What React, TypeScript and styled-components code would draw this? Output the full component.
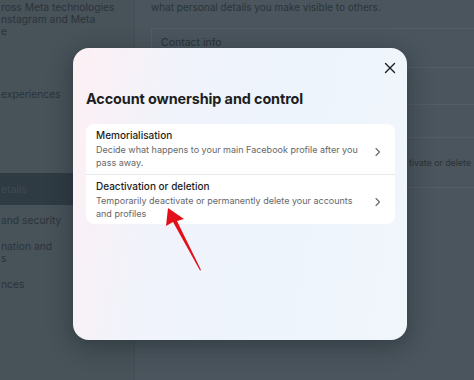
import React from "react";
import styled, { createGlobalStyle } from "styled-components";

const Global = createGlobalStyle`
  html, body { margin: 0; padding: 0; }
  body { font-family: Inter, "Open Sans", "Liberation Sans", sans-serif; }
  #root { width: 474px; height: 380px; overflow: hidden; }
`;

const Page = styled.div`
  position: relative;
  width: 474px;
  height: 380px;
  display: flex;
  background: #4a555d;
  overflow: hidden;
`;

const Sidebar = styled.div`
  width: 134px;
  flex: none;
  border-right: 1px solid #434e55;
  background: #475259;
  display: flex;
  flex-direction: column;
  color: #2b3439;
  font-size: 10.3px;
`;

const SideBlock = styled.div<{ $top: number }>`
  margin-top: ${(p) => p.$top}px;
  padding: 0 6px 0 1px;
  line-height: 12px;
`;

const SideItem = styled.div<{ $active?: boolean; $top?: number }>`
  margin-top: ${(p) => p.$top ?? 0}px;
  padding: 0 6px 0 1px;
  line-height: 12px;
  ${(p) =>
    p.$active &&
    `
    background: #2f3b43;
    height: 32px;
    display: flex;
    align-items: center;
    color: #3f4a51;
  `}
`;

const Content = styled.div`
  flex: 1;
  min-width: 0;
  padding-left: 16px;
  display: flex;
  flex-direction: column;
  color: #2b3439;
  font-size: 10px;
`;

const Lead = styled.div`
  line-height: 12px;
  margin-top: 1px;
`;

const InfoCard = styled.div`
  margin-top: 15px;
  border-top: 1px solid #525d64;
  border-left: 1px solid #525d64;
  display: flex;
  flex-direction: column;
`;

const InfoRow = styled.div<{ $h: number; $pt?: number }>`
  height: ${(p) => p.$h}px;
  box-sizing: border-box;
  border-bottom: 1px solid #525d64;
  padding: ${(p) => p.$pt ?? 0}px 0 0 9px;
  display: flex;
  align-items: ${(p) => (p.$pt ? "flex-start" : "center")};
  font-size: 10.5px;
  line-height: 13px;
  color: #2a3338;
`;

const InfoText = styled.div`
  padding-left: 248px;
  font-size: 9px;
  letter-spacing: -0.1px;
  white-space: nowrap;
`;

const Overlay = styled.div`
  position: absolute;
  inset: 0;
  padding: 48px 0 0 73px;
  display: flex;
  align-items: flex-start;
`;

const Modal = styled.div`
  position: relative;
  width: 334px;
  height: 292px;
  box-sizing: border-box;
  border-radius: 16px;
  background: linear-gradient(100deg, #fdf0f4 0%, #f1f3fb 28%, #edf4fc 60%, #f1f6fb 100%);
  box-shadow: 0 6px 24px rgba(20, 28, 34, 0.45);
  padding: 12px 12px 0 13px;
  display: flex;
  flex-direction: column;
`;

const CloseRow = styled.div`
  display: flex;
  justify-content: flex-end;
  margin-right: -3px;
`;

const CloseBtn = styled.button`
  width: 16px;
  height: 16px;
  padding: 0;
  border: none;
  background: none;
  display: flex;
  align-items: center;
  justify-content: center;
  color: #1c1e21;
`;

const Title = styled.h2`
  margin: 13px 0 0 0;
  font-size: 14.4px;
  line-height: 20px;
  font-weight: 700;
  color: #1c1e21;
  letter-spacing: -0.1px;
`;

const Card = styled.div`
  margin-top: 15px;
  background: #ffffff;
  border-radius: 8px;
  display: flex;
  flex-direction: column;
  overflow: hidden;
`;

const Row = styled.div<{ $divider?: boolean }>`
  height: 50px;
  box-sizing: border-box;
  padding: 5px 13px 0 10px;
  display: flex;
  align-items: center;
  gap: 8px;
  border-top: ${(p) => (p.$divider ? "1px solid #e7e9ec" : "none")};
`;

const RowText = styled.div`
  flex: 1;
  display: flex;
  flex-direction: column;
  align-self: flex-start;
`;

const RowTitle = styled.div`
  font-size: 10px;
  line-height: 13px;
  color: #1c1e21;
  font-weight: 500;
`;

const RowDesc = styled.div`
  font-size: 9px;
  line-height: 13px;
  color: #65676b;
  margin-top: 1px;
`;

const Arrow = styled.svg`
  position: absolute;
  left: 0;
  top: 0;
  pointer-events: none;
`;

const Chevron = () => (
  <svg width="8" height="10" viewBox="0 0 8 10">
    <path d="M2 1.5 L5.5 5 L2 8.5" fill="none" stroke="#65676b" strokeWidth="1.1" strokeLinecap="round" strokeLinejoin="round" />
  </svg>
);

export default function App() {
  return (
    <>
      <Global />
      <Page>
        <Sidebar>
          <SideBlock $top={1}>
            ross Meta technologies
            <br />
            nstagram and Meta
            <br />e
          </SideBlock>
          <SideItem $top={51}>experiences</SideItem>
          <SideItem $top={7}>&nbsp;</SideItem>
          <SideItem $top={54} $active>
            etails
          </SideItem>
          <SideItem $top={9}>and security</SideItem>
          <SideItem $top={14}>
            nation and
            <br />s
          </SideItem>
          <SideItem $top={14}>nces</SideItem>
        </Sidebar>
        <Content>
          <Lead>what personal details you make visible to others.</Lead>
          <InfoCard>
            <InfoRow $h={39} $pt={7}>Contact info</InfoRow>
            <InfoRow $h={37}>&nbsp;</InfoRow>
            <InfoRow $h={33}>&nbsp;</InfoRow>
            <InfoRow $h={50}>
              <InfoText>tivate or delete</InfoText>
            </InfoRow>
          </InfoCard>
        </Content>
        <Overlay>
          <Modal>
            <CloseRow>
              <CloseBtn aria-label="Close">
                <svg width="12" height="12" viewBox="0 0 12 12">
                  <path d="M1.5 1.5 L10.5 10.5 M10.5 1.5 L1.5 10.5" stroke="#1c1e21" strokeWidth="1.4" strokeLinecap="round" />
                </svg>
              </CloseBtn>
            </CloseRow>
            <Title>Account ownership and control</Title>
            <Card>
              <Row>
                <RowText>
                  <RowTitle>Memorialisation</RowTitle>
                  <RowDesc>Decide what happens to your main Facebook profile after you pass away.</RowDesc>
                </RowText>
                <Chevron />
              </Row>
              <Row $divider>
                <RowText>
                  <RowTitle>Deactivation or deletion</RowTitle>
                  <RowDesc>Temporarily deactivate or permanently delete your accounts and profiles</RowDesc>
                </RowText>
                <Chevron />
              </Row>
            </Card>
          </Modal>
        </Overlay>
        <Arrow width="474" height="380" viewBox="0 0 474 380">
          <polygon points="168,208 184,219 177,221 201,270 200,270.5 173,222 166,226" fill="#e3101a" />
        </Arrow>
      </Page>
    </>
  );
}
